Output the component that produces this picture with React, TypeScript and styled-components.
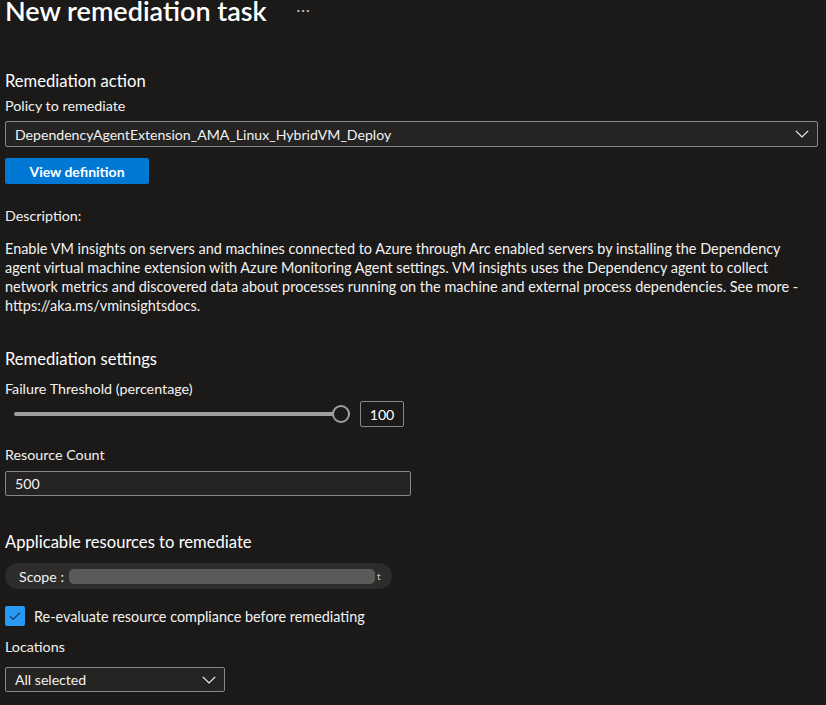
import React from "react";
import styled, { createGlobalStyle } from "styled-components";

const Global = createGlobalStyle`
  html, body { margin: 0; padding: 0; background: #1b1a19; }
  body { font-family: "Segoe UI", Lato, "Open Sans", sans-serif; color: #f3f2f1; overflow: hidden; }
  * { box-sizing: border-box; }
`;

const Page = styled.div`
  width: 826px;
  height: 705px;
  padding: 0 8px 0 5px;
  display: flex;
  flex-direction: column;
  overflow: hidden;
`;

const TitleRow = styled.div`
  display: flex;
  align-items: center;
  height: 30px;
  margin-top: -4px;
  gap: 30px;
`;

const Title = styled.h1`
  margin: 0;
  font-size: 27px;
  font-weight: 600;
  color: #ffffff;
  line-height: 30px;
  white-space: nowrap;
`;

const More = styled.span`
  font-size: 14px;
  letter-spacing: 1px;
  color: #c8c6c4;
  line-height: 30px;
  margin-top: -2px;
`;

const Heading = styled.h2<{ $top: number }>`
  margin: ${(p) => p.$top}px 0 0 0;
  font-size: 16.6px;
  font-weight: 400;
  line-height: 22px;
  color: #ffffff;
  white-space: nowrap;
`;

const Label = styled.div<{ $top: number }>`
  margin-top: ${(p) => p.$top}px;
  font-size: 14.3px;
  line-height: 18px;
  color: #f3f2f1;
  white-space: nowrap;
`;

const Select = styled.div<{ $width: string; $top: number; $height: number }>`
  margin-top: ${(p) => p.$top}px;
  width: ${(p) => p.$width};
  height: ${(p) => p.$height}px;
  border: 1px solid #8a8886;
  border-radius: 2px;
  background: #252423;
  display: flex;
  align-items: center;
  justify-content: space-between;
  padding: 0 8px 0 9px;
  font-size: 14.1px;
  color: #f3f2f1;
  white-space: nowrap;
`;

const Chevron = () => (
  <svg width="14" height="8" viewBox="0 0 14 8" fill="none">
    <path d="M0.8 0.8 L7 7 L13.2 0.8" stroke="#f3f2f1" strokeWidth="1.2" />
  </svg>
);

const PrimaryButton = styled.button`
  margin-top: 11px;
  width: 144px;
  height: 26px;
  border: none;
  border-radius: 2px;
  background: #0078d4;
  color: #ffffff;
  font-family: inherit;
  font-size: 14px;
  font-weight: 700;
  padding: 0;
`;

const Paragraph = styled.p`
  margin: 14px 0 0 0;
  font-size: 14.45px;
  line-height: 19px;
  color: #f3f2f1;
  white-space: nowrap;
`;

const SliderRow = styled.div`
  margin-top: 3px;
  display: flex;
  align-items: center;
  height: 26px;
  gap: 10px;
`;

const SliderTrack = styled.div`
  position: relative;
  margin-left: 9px;
  width: 336px;
  height: 18px;
  display: flex;
  align-items: center;
`;

const TrackBar = styled.div`
  width: 100%;
  height: 4px;
  border-radius: 2px;
  background: #a19f9d;
`;

const Thumb = styled.div`
  position: absolute;
  right: 0;
  top: 0;
  width: 18px;
  height: 18px;
  border-radius: 50%;
  border: 2px solid #a19f9d;
  background: #1b1a19;
`;

const SmallInput = styled.div`
  width: 44px;
  height: 26px;
  border: 1px solid #8a8886;
  border-radius: 2px;
  display: flex;
  align-items: center;
  justify-content: center;
  font-size: 14.2px;
  color: #ffffff;
`;

const TextInput = styled.div`
  margin-top: 7px;
  width: 406px;
  height: 25px;
  border: 1px solid #8a8886;
  border-radius: 2px;
  background: #252423;
  display: flex;
  align-items: center;
  padding-left: 9px;
  font-size: 14.2px;
  color: #f3f2f1;
`;

const ScopePill = styled.div`
  margin-top: 10px;
  width: 387px;
  height: 26px;
  border-radius: 13px;
  background: #2d2c2b;
  display: flex;
  align-items: center;
  padding-left: 14px;
  font-size: 14.2px;
  color: #f3f2f1;
  white-space: nowrap;
`;

const Redacted = styled.span`
  display: inline-block;
  margin-left: 5px;
  width: 306px;
  height: 15px;
  border-radius: 5px;
  background: #5a5a5b;
`;

const Tail = styled.span`
  margin-left: 2px;
  font-size: 10px;
  color: #c8c6c4;
`;

const CheckRow = styled.label`
  margin-top: 17px;
  display: flex;
  align-items: center;
  gap: 9px;
  height: 20px;
  font-size: 14.4px;
  color: #f3f2f1;
  white-space: nowrap;
`;

const CheckBox = styled.span`
  width: 20px;
  height: 20px;
  border-radius: 2px;
  background: #2899f5;
  display: flex;
  align-items: center;
  justify-content: center;
`;

export default function App() {
  return (
    <>
      <Global />
      <Page>
        <TitleRow>
          <Title>New remediation task</Title>
          <More>···</More>
        </TitleRow>

        <Heading $top={44}>Remediation action</Heading>
        <Label $top={5}>Policy to remediate</Label>
        <Select $width="813px" $top={6} $height={26}>
          <span>DependencyAgentExtension_AMA_Linux_HybridVM_Deploy</span>
          <Chevron />
        </Select>
        <PrimaryButton>View definition</PrimaryButton>

        <Label $top={23}>Description:</Label>
        <Paragraph>
          Enable VM insights on servers and machines connected to Azure through Arc enabled servers by installing the Dependency
          <br />
          agent virtual machine extension with Azure Monitoring Agent settings. VM insights uses the Dependency agent to collect
          <br />
          network metrics and discovered data about processes running on the machine and external process dependencies. See more -
          <br />
          https://aka.ms/vminsightsdocs.
        </Paragraph>

        <Heading $top={33}>Remediation settings</Heading>
        <Label $top={10}>Failure Threshold (percentage)</Label>
        <SliderRow>
          <SliderTrack>
            <TrackBar />
            <Thumb />
          </SliderTrack>
          <SmallInput>100</SmallInput>
        </SliderRow>

        <Label $top={19}>Resource Count</Label>
        <TextInput>500</TextInput>

        <Heading $top={35}>Applicable resources to remediate</Heading>
        <ScopePill>
          Scope :<Redacted />
          <Tail>t</Tail>
        </ScopePill>

        <CheckRow>
          <CheckBox>
            <svg width="12" height="10" viewBox="0 0 12 10" fill="none">
              <path d="M1 5.2 L4.2 8.4 L11 1.6" stroke="#1b3a5c" strokeWidth="1.3" />
            </svg>
          </CheckBox>
          Re-evaluate resource compliance before remediating
        </CheckRow>

        <Label $top={12}>Locations</Label>
        <Select $width="220px" $top={11} $height={25}>
          <span>All selected</span>
          <Chevron />
        </Select>
      </Page>
    </>
  );
}
